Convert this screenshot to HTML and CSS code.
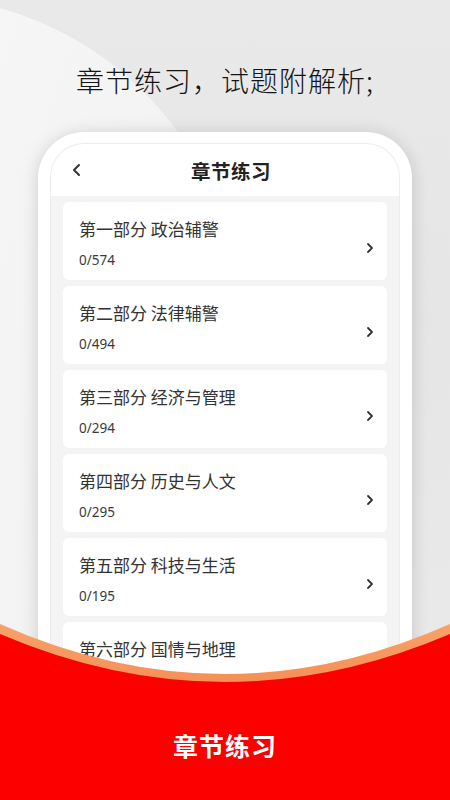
FILE: index.html
```html
<!DOCTYPE html>
<html lang="zh">
<head>
<meta charset="utf-8">
<title>章节练习</title>
<link rel="stylesheet" href="styles.css">
</head>
<body>
<div class="page">
  <svg class="bg-deco" width="450" height="800" viewBox="0 0 450 800">
    <defs>
      <linearGradient id="lg" x1="0" y1="0" x2="1" y2="1">
        <stop offset="0" stop-color="#f6f6f6"/>
        <stop offset="1" stop-color="#efefef"/>
      </linearGradient>
    </defs>
    <path d="M0 8 Q110 40 178 132 L240 800 L0 800 Z" fill="url(#lg)"/>
  </svg>
  <h1 class="headline">章节练习，试题附解析;</h1>
  <div class="phone">
    <div class="screen">
      <div class="nav">
        <svg class="back" width="12" height="14" viewBox="0 0 12 14"><path d="M8 2 L3 7 L8 12" fill="none" stroke="#333" stroke-width="2" stroke-linecap="round" stroke-linejoin="round"/></svg>
        <div class="nav-title">章节练习</div>
        <span></span>
      </div>
      <div class="list">
        <div class="card"><div class="card-text"><div class="card-title">第一部分 政治辅警</div><div class="card-count">0/574</div></div><svg class="chev" width="10" height="14" viewBox="0 0 10 14"><path d="M3 3 L7 7 L3 11" fill="none" stroke="#333" stroke-width="1.8" stroke-linecap="round" stroke-linejoin="round"/></svg></div>
        <div class="card"><div class="card-text"><div class="card-title">第二部分 法律辅警</div><div class="card-count">0/494</div></div><svg class="chev" width="10" height="14" viewBox="0 0 10 14"><path d="M3 3 L7 7 L3 11" fill="none" stroke="#333" stroke-width="1.8" stroke-linecap="round" stroke-linejoin="round"/></svg></div>
        <div class="card"><div class="card-text"><div class="card-title">第三部分 经济与管理</div><div class="card-count">0/294</div></div><svg class="chev" width="10" height="14" viewBox="0 0 10 14"><path d="M3 3 L7 7 L3 11" fill="none" stroke="#333" stroke-width="1.8" stroke-linecap="round" stroke-linejoin="round"/></svg></div>
        <div class="card"><div class="card-text"><div class="card-title">第四部分 历史与人文</div><div class="card-count">0/295</div></div><svg class="chev" width="10" height="14" viewBox="0 0 10 14"><path d="M3 3 L7 7 L3 11" fill="none" stroke="#333" stroke-width="1.8" stroke-linecap="round" stroke-linejoin="round"/></svg></div>
        <div class="card"><div class="card-text"><div class="card-title">第五部分 科技与生活</div><div class="card-count">0/195</div></div><svg class="chev" width="10" height="14" viewBox="0 0 10 14"><path d="M3 3 L7 7 L3 11" fill="none" stroke="#333" stroke-width="1.8" stroke-linecap="round" stroke-linejoin="round"/></svg></div>
        <div class="card"><div class="card-text"><div class="card-title">第六部分 国情与地理</div><div class="card-count">0/210</div></div><svg class="chev" width="10" height="14" viewBox="0 0 10 14"><path d="M3 3 L7 7 L3 11" fill="none" stroke="#333" stroke-width="1.8" stroke-linecap="round" stroke-linejoin="round"/></svg></div>
      </div>
    </div>
  </div>
  <div class="footer">
    <svg class="wave" width="450" height="180" viewBox="0 0 450 180">
      <defs>
        <linearGradient id="og" x1="0" y1="0" x2="0" y2="1">
          <stop offset="0" stop-color="#f7a26a"/>
          <stop offset="1" stop-color="#f26a2e"/>
        </linearGradient>
      </defs>
      <path d="M0 4 Q225 104 450 4 L450 180 L0 180 Z" fill="url(#og)"/>
      <path d="M0 14 Q225 110 450 14 L450 180 L0 180 Z" fill="#fc0000"/>
    </svg>
    <div class="footer-title">章节练习</div>
  </div>
</div>
</body>
</html>
```
FILE: styles.css
```css
* { box-sizing: border-box; }
html, body { margin: 0; padding: 0; }
body {
  width: 450px;
  height: 800px;
  overflow: hidden;
  font-family: "Noto Sans CJK SC", "Noto Sans", sans-serif;
}
.page {
  position: relative;
  width: 450px;
  height: 800px;
  overflow: hidden;
  background: linear-gradient(180deg, #e9e9e9 0%, #e6e6e6 40%, #ebebeb 100%);
  padding-top: 60px;
}
.bg-deco {
  position: absolute;
  left: 0;
  top: 0;
}
.headline {
  position: relative;
  margin: 0;
  height: 40px;
  line-height: 40px;
  text-align: center;
  font-size: 28px;
  font-weight: 300;
  color: #151515;
  letter-spacing: 1px;
}
.phone {
  position: relative;
  margin: 32px 38px 0;
  width: 374px;
  height: 720px;
  background: #fff;
  border-radius: 46px 46px 0 0;
  padding: 11px 12px 0;
  box-shadow: 0 2px 18px rgba(0, 0, 0, 0.16);
}
.screen {
  height: 100%;
  background: #f4f4f4;
  border: 1px solid #ececec;
  border-bottom: none;
  border-radius: 34px 34px 0 0;
  overflow: hidden;
}
.nav {
  height: 52px;
  background: #fff;
  display: grid;
  grid-template-columns: 1fr auto 1fr;
  align-items: center;
  padding: 0 0 0 12px;
}
.back { display: block; margin-left: 8px; }
.nav-title {
  font-size: 19.5px;
  font-weight: 700;
  color: #222;
  letter-spacing: 0.5px;
}
.list {
  display: flex;
  flex-direction: column;
  gap: 6px;
  padding: 6px 12px 0 12px;
}
.card {
  height: 78px;
  background: #fff;
  border-radius: 6px;
  display: flex;
  align-items: center;
  justify-content: space-between;
  padding: 0 12px 0 16px;
}
.card-text {
  display: flex;
  flex-direction: column;
  gap: 11px;
  padding-top: 3px;
}
.card-title {
  font-size: 17px;
  line-height: 23px;
  color: #333;
}
.card-count {
  font-size: 13.5px;
  line-height: 18px;
  color: #3a3a3a;
  font-family: "Noto Sans", "Noto Sans CJK SC", sans-serif;
}
.chev { display: block; margin-top: 14px; }
.footer {
  position: absolute;
  left: 0;
  bottom: 0;
  width: 450px;
  height: 180px;
}
.wave {
  position: absolute;
  left: 0;
  top: 0;
}
.footer-title {
  position: absolute;
  left: 0;
  right: 0;
  top: 108px;
  text-align: center;
  color: #fff;
  font-size: 25px;
  font-weight: 700;
  line-height: 34px;
  letter-spacing: 1px;
}
```
